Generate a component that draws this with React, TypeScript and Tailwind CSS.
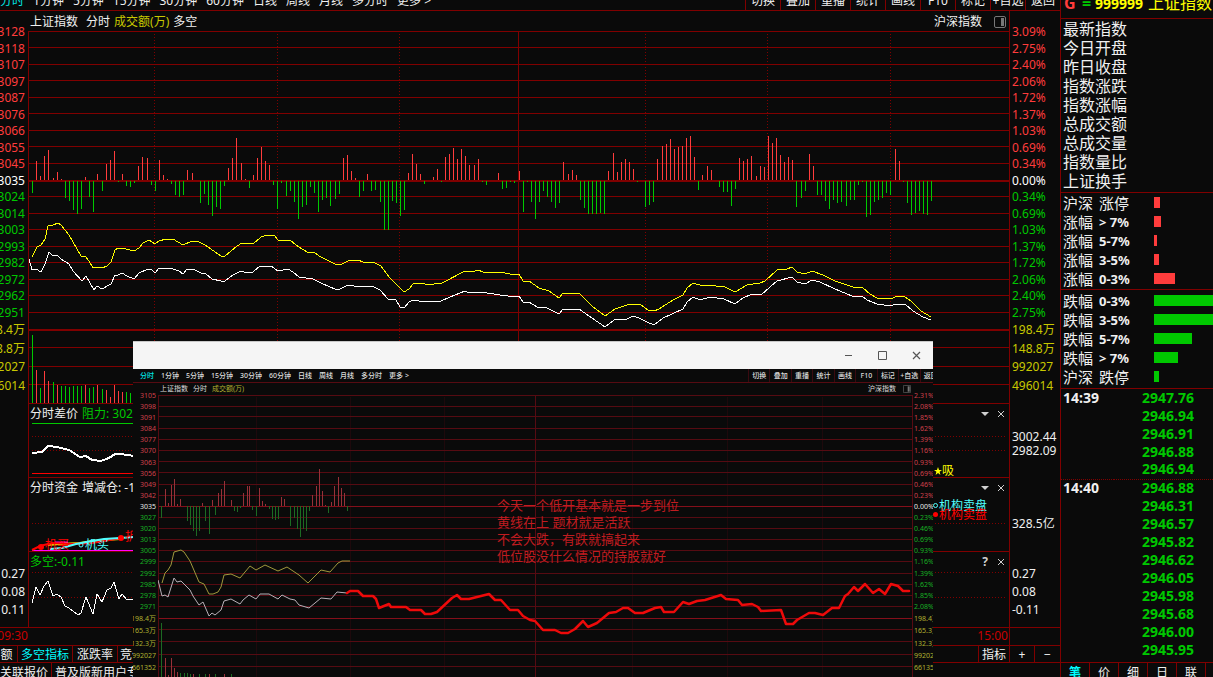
import type { ReactNode } from 'react'

const PRICES = ['3128', '3118', '3107', '3097', '3087', '3076', '3066', '3055', '3045', '3035', '3024', '3014', '3003', '2993', '2982', '2972', '2962', '2951']
const PERCENTS = ['3.09%', '2.75%', '2.40%', '2.06%', '1.72%', '1.37%', '1.03%', '0.69%', '0.34%', '0.00%', '0.34%', '0.69%', '1.03%', '1.37%', '1.72%', '2.06%', '2.40%', '2.75%']
const VOLUMES = ['198.4万', '148.8万', '992027', '496014']

const MINI_PRICES = ['3105', '3098', '3091', '3084', '3077', '3070', '3063', '3056', '3049', '3042', '3035', '3027', '3020', '3013', '3005', '2999', '2992', '2985', '2978', '2971']
const MINI_PERCENTS = ['2.31%', '2.08%', '1.85%', '1.62%', '1.39%', '1.16%', '0.93%', '0.69%', '0.46%', '0.23%', '0.00%', '0.23%', '0.46%', '0.69%', '0.93%', '1.16%', '1.39%', '1.62%', '1.85%', '2.08%']
const MINI_VOLUMES = ['198.4万', '165.3万', '132.3万', '992027', '661352']

const PERIODS = ['分时', '1分钟', '5分钟', '15分钟', '30分钟', '60分钟', '日线', '周线', '月线', '多分时', '更多 >']
const TOOLS = ['切换', '叠加', '重播', '统计', '画线', 'F10', '标记', '+自选', '返回']

const QUOTE_FIELDS = ['最新指数', '今日开盘', '昨日收盘', '指数涨跌', '指数涨幅', '总成交额', '总成交量', '指数量比', '上证换手']
const RISERS = [
  { label: '沪深', range: '涨停', width: 6 },
  { label: '涨幅', range: '> 7%', width: 7 },
  { label: '涨幅', range: '5-7%', width: 3 },
  { label: '涨幅', range: '3-5%', width: 5 },
  { label: '涨幅', range: '0-3%', width: 21 },
]
const FALLERS = [
  { label: '跌幅', range: '0-3%', width: 60 },
  { label: '跌幅', range: '3-5%', width: 60 },
  { label: '跌幅', range: '5-7%', width: 38 },
  { label: '跌幅', range: '> 7%', width: 24 },
  { label: '沪深', range: '跌停', width: 5 },
]
const TICKS = [
  ['14:39', '2947.76'], ['', '2946.94'], ['', '2946.91'], ['', '2946.88'], ['', '2946.94'],
  ['14:40', '2946.88'], ['', '2946.31'], ['', '2946.57'], ['', '2945.82'], ['', '2946.62'],
  ['', '2946.05'], ['', '2945.98'], ['', '2945.68'], ['', '2946.00'], ['', '2945.95'],
]

// x,y of the free end of each bar; anything above the zero line is red
const FORCE =
  '32,193 36,161 40,176 44,156 48,150 53,178 57,172 61,179 65,198 69,201 73,210 77,214 81,209 85,177 89,197 93,212 97,174 102,191 106,164 110,160 114,151 118,182 122,174 126,186 130,187 134,183 138,166 142,157 147,158 151,185 155,191 159,160 163,175 167,179 171,184 175,195 179,197 183,195 187,170 192,173 200,203 204,194 208,205 212,216 216,207 220,209 224,186 228,168 232,158 236,138 241,163 245,179 249,188 253,175 257,158 261,147 265,161 269,165 273,185 277,209 281,183 286,196 290,191 294,202 298,219 302,207 306,205 310,187 314,193 318,212 322,200 326,198 330,206 335,199 339,194 343,158 347,155 351,171 355,178 359,197 363,191 367,174 371,191 375,190 380,202 384,230 388,230 392,201 396,203 400,216 404,210 408,173 412,154 416,164 420,174 424,184 433,177 437,169 441,182 445,157 449,154 453,148 457,159 461,149 465,156 469,165 474,165 478,159 482,182 486,185 498,173 502,189 506,188 510,182 514,183 519,171 523,212 527,182 531,202 535,219 539,202 543,191 547,197 551,202 555,208 559,203 563,162 568,174 572,170 576,175 580,200 584,208 588,214 592,214 596,214 600,213 604,214 608,171 613,153 617,172 621,162 625,159 629,162 633,169 637,182 645,207 649,205 653,202 657,159 662,146 666,144 670,139 674,149 678,147 682,146 686,138 690,136 694,157 698,190 702,175 707,166 711,170 719,187 723,192 727,192 731,206 735,189 739,158 743,161 747,159 751,156 756,176 760,166 764,167 768,136 772,143 776,138 780,155 784,162 788,157 792,160 796,207 801,198 805,191 809,154 813,166 817,195 821,195 825,201 829,209 833,200 837,203 841,202 846,206 850,200 854,200 858,185 862,182 866,217 870,215 874,202 878,200 882,198 886,193 890,195 895,149 899,161 903,182 907,203 911,215 915,213 919,211 923,214 927,215 931,201'
const MINI_FORCE =
  '161,518 165,489 168,503 171,485 174,479 177,504 180,499 187,521 190,525 193,531 196,536 199,531 202,503 205,521 209,534 212,500 215,515 218,493 221,489 224,481 231,500 234,511 237,512 240,508 243,493 247,486 249,486 252,510 256,516 259,488 262,501 265,504 269,509 272,519 275,520 278,519 281,497 284,499 290,526 294,518 297,529 300,537 303,529 306,531 309,511 312,495 316,486 319,469 322,491 325,505 328,513 331,502 334,486 338,477 341,488 344,493 347,511'

const UP_VOLUME = '36,370 44,371 48,381 57,385 85,385 97,385 106,390 110,397 114,385 118,391 122,392'
const DOWN_VOLUME = '32,335 40,388 53,382 61,386 65,386 69,387 73,386 77,386 81,386 89,388 93,387 102,389 126,392 130,393'
const MINI_UP_VOLUME = '165,658 168,675 171,658 174,668 177,672 193,674 209,674 224,674'
const MINI_DOWN_VOLUME = '161,623 180,673 184,673 187,673 190,674 199,674 205,674 215,674 231,674'

const YELLOW_LINE =
  '32,257 37,247 41,245 45,239 48,226 53,225 58,223 61,225 69,235 81,256 86,257 89,261 93,268 97,267 102,268 107,266 111,262 115,250 118,248 126,249 134,251 139,248 143,243 149,240 155,244 159,241 166,239 173,239 183,245 192,241 197,241 205,245 221,256 225,256 237,246 242,243 253,244 261,237 267,235 274,235 278,240 291,241 299,247 307,252 314,252 319,256 335,264 340,265 350,260 358,260 363,262 373,262 381,266 389,277 394,282 400,288 404,292 409,289 413,284 423,283 427,285 442,283 465,271 475,271 478,270 483,272 500,272 515,275 519,274 523,281 529,281 539,288 549,291 559,298 563,293 579,293 592,306 605,316 615,309 630,304 640,304 648,310 654,311 659,309 673,300 683,295 687,288 693,283 703,286 707,285 725,287 735,292 747,285 760,283 765,281 777,270 787,269 792,267 797,272 805,274 812,271 823,275 835,281 853,287 863,288 870,294 877,298 890,299 898,296 905,297 911,301 921,311 931,317'
const WHITE_LINE =
  '28,255 32,270 36,269 41,272 45,264 49,252 53,256 57,255 61,259 69,264 73,271 82,281 86,276 94,290 97,286 102,289 111,284 115,275 118,275 122,273 127,276 134,279 139,273 148,269 152,270 155,273 159,268 173,269 179,271 183,274 187,269 195,270 201,273 206,274 212,279 221,281 225,281 233,275 241,271 247,273 253,272 260,266 271,266 278,271 288,269 293,272 299,277 313,279 323,284 335,289 340,289 348,285 360,287 372,286 380,290 388,299 396,300 400,307 404,308 409,302 413,300 425,302 441,301 450,297 465,291 469,293 481,292 500,295 515,297 519,296 523,302 529,302 537,307 547,308 559,314 563,309 579,309 592,318 605,327 614,320 627,319 633,316 639,318 647,322 654,325 663,318 683,309 687,302 693,297 700,300 710,297 724,299 735,304 743,298 752,294 761,295 770,287 777,281 792,277 797,282 805,284 812,280 820,282 835,289 852,296 862,296 867,300 877,304 891,306 895,304 905,304 913,311 923,317 931,320'
const MINI_YELLOW =
  '162,583 165,573 168,570 171,565 174,552 181,550 184,552 190,561 199,582 204,584 209,594 213,594 218,592 221,587 224,575 231,574 240,578 250,566 256,570 265,565 278,571 287,567 299,575 308,583 321,570 330,572 338,563 342,561 350,561'
const MINI_WHITE =
  '158,580 162,596 165,595 168,597 174,578 177,582 181,581 190,590 193,596 199,605 203,602 209,616 212,613 215,615 221,610 224,601 231,599 240,604 243,600 249,595 256,599 260,594 269,594 278,599 282,595 290,599 295,600 299,605 309,608 321,598 331,599 337,592 347,593'
const FORECAST =
  '347,593 350,591 358,591 363,596 373,596 376,599 379,608 389,604 391,607 406,607 410,610 421,610 425,614 431,614 437,612 452,598 457,595 461,599 469,599 489,594 495,600 501,600 510,610 518,610 523,616 530,620 535,621 543,630 555,630 561,633 568,633 575,629 583,621 588,627 597,623 609,613 616,612 623,608 628,608 635,613 643,613 655,608 661,607 664,612 674,612 683,602 689,604 697,601 705,600 721,595 726,599 738,600 742,605 752,604 758,607 761,611 781,610 786,624 793,624 797,620 809,613 815,613 823,615 832,608 839,608 845,596 848,594 854,587 858,591 865,584 873,593 879,589 885,594 891,584 898,586 903,591 909,591'
const SPREAD_LINE = '32,453 42,452 48,446 57,447 69,450 80,457 86,456 92,460 101,461 109,458 115,454 121,454 134,456'
const BULL_LINE =
  '32,603 36,587 40,595 44,586 48,581 53,596 57,594 61,597 65,606 69,608 78,615 81,613 86,597 93,614 97,594 102,602 107,590 111,588 114,582 119,599 122,594 127,600 134,599'

const pairs = (s: string) => s.split(' ').map((p) => p.split(',').map(Number))

// one path of vertical strokes from each point to the base line
const strokes = (pts: number[][], base: number) => pts.map(([x, y]) => `M${x}.5 ${y}V${base}`).join('')

const rowLines = (ys: number[], x1: number, x2: number) => ys.map((y) => `M${x1} ${y}.5H${x2}`).join('')

const toneAt = (i: number, zero: number, up: string, mid: string, down: string) => (i < zero ? up : i === zero ? mid : down)

function PeriodButtons({ className }: { className: string }) {
  return (
    <nav className={className}>
      {PERIODS.map((p, i) => (
        <button key={p} className={i === 0 ? 'whitespace-nowrap text-[#00e5e5]' : 'whitespace-nowrap'}>
          {p}
        </button>
      ))}
    </nav>
  )
}

function LayoutIcon({ className }: { className: string }) {
  return (
    <svg viewBox="0 0 12 12" className={className}>
      <rect x="0.5" y="0.5" width="11" height="11" rx="1.5" fill="none" stroke="#777" />
      <rect x="7" y="2" width="3" height="8" fill="#777" />
    </svg>
  )
}

function MainAxis({ side }: { side: 'left' | 'right' }) {
  const left = side === 'left'
  return (
    <div
      className={
        left
          ? 'flex w-7 shrink-0 flex-col items-end overflow-hidden pr-[3px] text-right'
          : 'flex w-[51px] shrink-0 flex-col items-start border-l border-[#800000] pl-0.5'
      }
    >
      <div className="mt-3 flex h-[297px] flex-col justify-between">
        {(left ? PRICES : PERCENTS).map((v, i) => (
          <span key={i} className={`h-4 leading-[17px] ${toneAt(i, 9, 'text-[#ff3c3c]', 'text-white', 'text-[#00c800]')}`}>
            {v}
          </span>
        ))}
      </div>
      <div className={`mt-px flex h-[72px] flex-col justify-between text-[#c8c800] ${left ? 'items-end' : 'items-start'}`}>
        {VOLUMES.map((v) => (
          <span key={v} className="h-4 leading-[17px] whitespace-nowrap">
            {v}
          </span>
        ))}
      </div>
      <div className="mt-[11px] h-[74px] pt-[26px] leading-[14px]">
        {!left && (
          <>
            <p>3002.44</p>
            <p>2982.09</p>
          </>
        )}
      </div>
      <div className="h-[74px] pt-[37px] leading-[18px]">{!left && <p>328.5亿</p>}</div>
      <div className="h-[75px] pt-[13px] leading-[18px]">
        <p>0.27</p>
        <p>0.08</p>
        <p>{left ? '0.11' : '-0.11'}</p>
      </div>
    </div>
  )
}

function MainChart() {
  const force = pairs(FORCE)
  return (
    <svg
      viewBox="29 31 980 373"
      preserveAspectRatio="none"
      shapeRendering="crispEdges"
      fill="none"
      className="block h-[373px] w-full"
    >
      <path d={rowLines([31, 47, 64, 80, 97, 113, 130, 146, 163, 180, 181, 196, 213, 229, 246, 262, 279, 295, 312, 329, 330, 347, 366, 384, 403], 29, 1009)} stroke="#800000" />
      <path d="M154.5 34V403M277.5 34V403M399.5 34V403M645.5 34V403M767.5 34V403M890.5 34V403" stroke="#800000" strokeDasharray="1 2" />
      <path d="M518.5 31V403" stroke="#800000" />
      <path d={strokes(force.filter(([, y]) => y < 180), 180)} stroke="#ff3c3c" />
      <path d={strokes(force.filter(([, y]) => y > 180), 181)} stroke="#00c800" />
      <path d={strokes(pairs(UP_VOLUME), 403)} stroke="#ff3c3c" />
      <path d={strokes(pairs(DOWN_VOLUME), 403)} stroke="#00c800" />
      <polyline points={YELLOW_LINE} stroke="#ffff00" />
      <polyline points={WHITE_LINE} stroke="#ffffff" />
    </svg>
  )
}

type PanelProps = { box: string; viewBox: string; title: ReactNode; help?: boolean; drawing: ReactNode; children?: ReactNode }

function Panel({ box, viewBox, title, help, drawing, children }: PanelProps) {
  return (
    <section className={`relative ${box}`}>
      <svg viewBox={viewBox} preserveAspectRatio="none" fill="none" className="absolute inset-0 h-full w-full">
        {drawing}
      </svg>
      <header className="relative flex h-5 items-center justify-between pr-1 pl-px leading-5">
        <div className="flex gap-1">{title}</div>
        <div className="flex items-center gap-2 text-[#d0d0d0]">
          {help ? (
            <button className="w-2 font-bold">?</button>
          ) : (
            <button aria-label="展开">
              <svg viewBox="0 0 8 4" className="block h-1 w-2">
                <path d="M0 0H8L4 4Z" fill="currentColor" />
              </svg>
            </button>
          )}
          <button aria-label="关闭">
            <svg viewBox="0 0 8 8" className="block h-2 w-2">
              <path d="M1 1L7 7M7 1L1 7" stroke="currentColor" />
            </svg>
          </button>
        </div>
      </header>
      {children}
    </section>
  )
}

function IndicatorPanels() {
  return (
    <>
      <Panel
        box="h-[74px] border-b border-[#800000]"
        viewBox="29 404 980 73"
        title={
          <>
            <span>分时差价</span>
            <span className="text-[#00c800]">阻力: 302</span>
          </>
        }
        drawing={
          <g shapeRendering="crispEdges">
            <path d="M32 436.5H1007M32 450.5H1007" stroke="#800000" strokeDasharray="1 2" />
            <path d="M32 423.5H931" stroke="#00c800" />
            <path d="M32 473.5H931" stroke="#ff0000" />
            <polyline points={SPREAD_LINE} stroke="#fff" strokeWidth="2" />
          </g>
        }
      >
        <span className="absolute right-[55px] bottom-0 flex items-center leading-3 text-[#ffff00]">
          <svg viewBox="0 0 10 10" className="h-2 w-2">
            <path d="M5 0L6.3 3.6H10L7 6L8 10L5 7.6L2 10L3 6L0 3.6H3.7Z" fill="currentColor" />
          </svg>
          吸
        </span>
      </Panel>
      <Panel
        box="h-[74px] border-b border-[#800000]"
        viewBox="29 478 980 73"
        title={
          <>
            <span>分时资金</span>
            <span>增减仓: -1</span>
          </>
        }
        drawing={
          <>
            <path d="M32 523.5H1007" stroke="#800000" strokeDasharray="1 2" shapeRendering="crispEdges" />
            <path d="M55 542.5H68" stroke="#ff00ff" strokeWidth="2" />
            <path d="M32 550.5H134" stroke="#ff00ff" />
            <path d="M48 545L60 544L80 543L92 541L120 539" stroke="#e8e800" strokeWidth="2" />
            <path d="M32 550L40 546L52 543L72 544L92 543L104 541L121 538" stroke="#ff0000" strokeWidth="2" />
            <path d="M50 549L62 548L76 544L92 541L104 539L120 538L134 537" stroke="#50ffff" strokeWidth="2" />
            <circle cx="41" cy="547" r="3" fill="#ff0000" />
            <circle cx="121" cy="538" r="3" fill="#ff0000" />
            <circle cx="81" cy="545" r="2" stroke="#50ffff" />
          </>
        }
      >
        <span className="absolute bottom-0 left-4 leading-3 text-[#ff0000]">机买</span>
        <span className="absolute bottom-0 left-14 leading-3 text-[#50ffff]">机买</span>
        <span className="absolute bottom-2 left-24 leading-3 text-[#ff0000]">折</span>
        <div className="absolute top-[23px] right-[22px] leading-[9px]">
          <p className="flex items-center gap-px text-[#50ffff]">
            <i className="h-[5px] w-[5px] rounded-full border border-[#50ffff]" />
            机构卖盘
          </p>
          <p className="flex items-center gap-px text-[#ff0000]">
            <i className="h-[5px] w-[5px] rounded-full bg-[#ff0000]" />
            机构卖盘
          </p>
        </div>
      </Panel>
      <Panel
        box="h-[75px]"
        viewBox="29 552 980 75"
        help
        title={<span className="text-[#00c800]">多空:-0.11</span>}
        drawing={
          <g shapeRendering="crispEdges">
            <path d="M32 572.5H1007M32 597.5H1007" stroke="#800000" strokeDasharray="1 2" />
            <polyline points={BULL_LINE} stroke="#fff" />
          </g>
        }
      />
    </>
  )
}

function MiniAxis({ side }: { side: 'left' | 'right' }) {
  const left = side === 'left'
  return (
    <div
      className={
        left
          ? 'flex w-[25px] shrink-0 flex-col items-end overflow-hidden pr-0.5'
          : 'flex w-5 shrink-0 flex-col items-start overflow-hidden pl-px'
      }
    >
      <div className="mt-[7px] flex h-[221px] shrink-0 flex-col justify-between">
        {(left ? MINI_PRICES : MINI_PERCENTS).map((v, i) => (
          <span key={i} className={`h-2.5 leading-[11px] ${toneAt(i, 10, 'text-[#d0404a]', 'text-[#e8e8e8]', 'text-[#18b024]')}`}>
            {v}
          </span>
        ))}
      </div>
      <div className={`mt-0.5 flex h-[59px] shrink-0 flex-col justify-between text-[#b0b030] ${left ? 'items-end' : 'items-start'}`}>
        {MINI_VOLUMES.map((v) => (
          <span key={v} className="h-2.5 leading-[11px] whitespace-nowrap">
            {v}
          </span>
        ))}
      </div>
    </div>
  )
}

function MiniChart() {
  const force = pairs(MINI_FORCE)
  return (
    <svg viewBox="158 395 755 282" preserveAspectRatio="none" fill="none" className="block h-[282px] w-full">
      <g shapeRendering="crispEdges">
        <path d="M256.5 397V677M350.5 397V677M444.5 397V677M632.5 397V677M727.5 397V677M822.5 397V677" stroke="#1e090c" />
        <path d={rowLines([395, 406, 416, 428, 439, 450, 461, 472, 484, 495, 517, 528, 539, 550, 561, 573, 584, 595, 606, 629, 641, 654, 666], 158, 913)} stroke="#560b12" />
        <path d={rowLines([506, 618], 158, 913)} stroke="#840f1a" />
        <path d="M158.5 395V677M912.5 395V677M535.5 395V677" stroke="#560b12" />
        <path d={strokes(force.filter(([, y]) => y < 506), 506)} stroke="#983038" />
        <path d={strokes(force.filter(([, y]) => y > 506), 506)} stroke="#1c6a22" />
        <path d={strokes(pairs(MINI_UP_VOLUME), 677)} stroke="#983038" />
        <path d={strokes(pairs(MINI_DOWN_VOLUME), 677)} stroke="#1c6a22" />
      </g>
      <polyline points={MINI_YELLOW} stroke="#a0983c" />
      <polyline points={MINI_WHITE} stroke="#b8b0b8" />
      <polyline points={FORECAST} stroke="#ee0a0a" strokeWidth="2.5" strokeLinejoin="round" strokeLinecap="round" />
    </svg>
  )
}

function PopupWindow() {
  return (
    <div className="absolute top-[341px] right-[127px] bottom-0 left-[133px] flex flex-col overflow-hidden bg-[#0a0a0a] text-[7px] text-[#dcdcdc]">
      <div className="flex h-7 shrink-0 items-stretch justify-end border-t border-[#c8c8c8] bg-[#f5f5f5] text-[#555]">
        <button aria-label="最小化" className="flex w-[34px] items-center justify-center">
          <svg viewBox="0 0 9 9" className="h-[9px] w-[9px]">
            <path d="M1 4.5H8" stroke="currentColor" />
          </svg>
        </button>
        <button aria-label="最大化" className="flex w-[34px] items-center justify-center">
          <svg viewBox="0 0 9 9" className="h-[9px] w-[9px]">
            <path d="M0.5 0.5H8.5V8.5H0.5Z" fill="none" stroke="currentColor" />
          </svg>
        </button>
        <button aria-label="关闭" className="flex w-[34px] items-center justify-center">
          <svg viewBox="0 0 9 9" className="h-[9px] w-[9px]">
            <path d="M1 1L8 8M8 1L1 8" stroke="currentColor" strokeWidth="1.2" />
          </svg>
        </button>
      </div>
      <div className="flex h-3.5 shrink-0 items-stretch justify-between overflow-hidden border-b border-[#560b12] leading-[13px]">
        <PeriodButtons className="flex gap-[7px] pl-[7px] font-medium" />
        <div className="-mr-2 grid w-[193px] shrink-0 grid-cols-9 font-medium">
          {TOOLS.map((t) => (
            <button key={t} className="border-l border-[#3a0a10] whitespace-nowrap">
              {t}
            </button>
          ))}
        </div>
      </div>
      <div className="flex min-h-0 flex-1">
        <MiniAxis side="left" />
        <div className="min-w-0 flex-1">
          <div className="flex h-3 items-center justify-between pr-0.5 pl-0.5 leading-3">
            <div className="flex gap-[5px]">
              <span>上证指数</span>
              <span>分时</span>
              <span className="text-[#b0b030]">成交额(万)</span>
            </div>
            <div className="flex items-center gap-[7px]">
              <span>沪深指数</span>
              <LayoutIcon className="h-2 w-2" />
            </div>
          </div>
          <MiniChart />
        </div>
        <MiniAxis side="right" />
      </div>
      <div className="absolute top-[156px] left-[364px] text-[13px] leading-[17px] text-[#c01c20]">
        <p>今天一个低开基本就是一步到位</p>
        <p>黄线在上 题材就是活跃</p>
        <p>不会大跌，有跌就搞起来</p>
        <p>低位股没什么情况的持股就好</p>
      </div>
    </div>
  )
}

function Breadth({ rows, tone, className }: { rows: typeof RISERS; tone: string; className: string }) {
  return (
    <ul className={`border-b border-[#800000] pl-0.5 text-[15px] leading-[18px] ${className}`}>
      {rows.map((r) => (
        <li key={r.label + r.range} className="flex h-[19px] items-center">
          <span className="w-9 shrink-0">{r.label}</span>
          <span className={r.range.includes('%') ? 'w-[55px] shrink-0 text-[13px] font-bold' : 'w-[55px] shrink-0'}>{r.range}</span>
          <span className={`h-[11px] shrink-0 ${tone}`} style={{ width: r.width }} />
        </li>
      ))}
    </ul>
  )
}

function Sidebar() {
  return (
    <aside className="flex w-[153px] shrink-0 flex-col overflow-hidden border-l border-[#800000]">
      <h1 className="flex h-[19px] shrink-0 gap-[5px] overflow-hidden border-b border-[#800000] pl-[3px] text-base leading-[7px] whitespace-nowrap text-[#ffff00]">
        <b className="w-[13px] text-[#ff3c3c]">G</b>
        <b className="w-2 text-[#00c800]">=</b>
        <b className="text-sm leading-[7px]">999999</b>
        <span>上证指数</span>
      </h1>
      <ul className="border-b border-[#800000] py-px pl-0.5 text-base">
        {QUOTE_FIELDS.map((f) => (
          <li key={f} className="h-[19px] leading-[19px]">
            {f}
          </li>
        ))}
      </ul>
      <Breadth rows={RISERS} tone="bg-[#ff3c3c]" className="pb-px" />
      <Breadth rows={FALLERS} tone="bg-[#00c800]" className="pt-px pb-0.5" />
      <table className="w-full border-collapse text-sm font-bold">
        <tbody>
          {TICKS.map(([time, price], i) => (
            <tr key={i} className={i === 5 ? 'h-[18px] border-t border-dotted border-[#800000]' : 'h-[18px]'}>
              <td className="p-0 pb-px pl-0.5 leading-4">{time}</td>
              <td className="p-0 pr-[19px] pb-px text-right leading-4 text-[#00c800]">{price}</td>
            </tr>
          ))}
        </tbody>
      </table>
      <div className="mt-auto flex h-[15px] shrink-0 items-start overflow-hidden border-t border-[#800000] leading-[19px]">
        {['笔', '价', '细', '日', '联'].map((t, i) => (
          <button key={t} className={`w-[29px] shrink-0 border-r border-[#800000] ${i === 0 ? 'font-bold text-[#00ffff]' : ''}`}>
            {t}
          </button>
        ))}
      </div>
    </aside>
  )
}

export default function App() {
  return (
    <div className="flex h-screen overflow-hidden bg-[#0a0a0a] font-['Noto_Sans','Noto_Sans_CJK_SC',sans-serif] text-xs text-[#f0f0f0]">
      <main className="relative flex min-w-0 flex-1 flex-col overflow-hidden">
        <div className="flex h-[11px] shrink-0 items-end justify-between overflow-hidden border-b border-[#800000] leading-[18px]">
          <PeriodButtons className="flex gap-[9px]" />
          <div className="flex">
            {TOOLS.map((t) => (
              <button key={t} className="w-[35px] border-l border-[#800000] whitespace-nowrap">
                {t}
              </button>
            ))}
          </div>
        </div>

        <div className="flex shrink-0 border-b border-[#800000]">
          <MainAxis side="left" />
          <div className="min-w-0 flex-1">
            <div className="flex h-5 items-center justify-between pt-px pr-[3px] pl-0.5">
              <div className="flex gap-1">
                <span className="mr-1">上证指数</span>
                <span>分时</span>
                <span className="text-[#c8c800]">成交额(万)</span>
                <span>多空</span>
              </div>
              <div className="flex items-center gap-3">
                <span>沪深指数</span>
                <LayoutIcon className="h-3 w-3" />
              </div>
            </div>
            <div className="border-l border-[#800000]">
              <MainChart />
              <IndicatorPanels />
            </div>
          </div>
          <MainAxis side="right" />
        </div>

        <div className="flex h-[18px] shrink-0 border-b border-[#800000] leading-4 text-[#c80000]">
          <span className="flex w-7 justify-end">09:30</span>
          <span className="flex-1 pr-px text-right">15:00</span>
          <span className="w-[51px] border-l border-[#800000]" />
        </div>
        <div className="flex h-[17px] shrink-0 justify-between overflow-hidden border-b border-[#800000] leading-[18px]">
          <div className="flex items-start">
            <button className="w-[18px] border-r border-[#800000] pr-1">额</button>
            <button className="w-[55px] border-r border-[#800000]  text-[#00ffff]">多空指标</button>
            <button className="w-[45px] border-r border-[#800000]">涨跌率</button>
            <button className="pl-0.5">竞价图</button>
          </div>
          <div className="flex items-start">
            <button className="w-[31px] border-l border-[#800000]">指标</button>
            <button className="w-[25px] border-l border-[#800000]">+</button>
            <button className="w-[26px] border-l border-[#800000]">−</button>
          </div>
        </div>
        <div className="flex min-h-0 flex-1 overflow-hidden leading-[19px]">
          <a href="#quotes" className="w-[52px] border-r border-[#800000]">
            关联报价
          </a>
          <a href="#guide" className="pl-[3px]">
            普及版新用户专享
          </a>
        </div>

        <PopupWindow />
      </main>
      <Sidebar />
    </div>
  )
}
